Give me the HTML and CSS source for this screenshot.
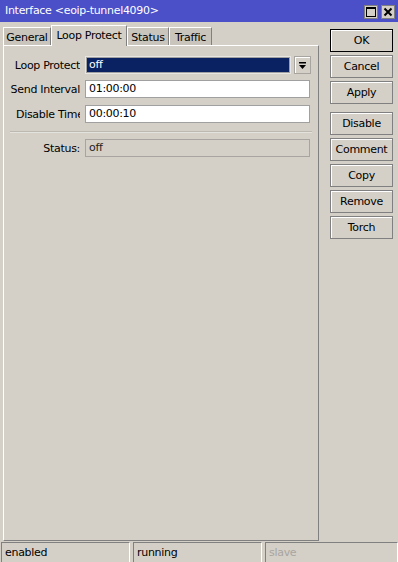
FILE: index.html
```html
<!DOCTYPE html>
<html>
<head>
<meta charset="utf-8">
<link rel="stylesheet" href="styles.css">
</head>
<body>
<div class="window">
  <div class="titlebar">
    <span class="title">Interface &lt;eoip-tunnel4090&gt;</span>
    <div class="tbtns">
      <span class="tbtn"><svg width="12" height="12" viewBox="0 0 12 12"><rect x="1.5" y="1.5" width="9" height="9" fill="none" stroke="#000" stroke-width="1"/><rect x="1" y="1" width="10" height="2" fill="#000"/></svg></span>
      <span class="tbtn"><svg width="12" height="12" viewBox="0 0 12 12"><path d="M2.5 2.5 L9.5 9.5 M9.5 2.5 L2.5 9.5" stroke="#000" stroke-width="2"/></svg></span>
    </div>
  </div>
  <div class="main">
    <div class="left">
      <div class="tabs">
        <div class="tab t-general">General</div>
        <div class="tab active t-loop">Loop Protect</div>
        <div class="tab t-status">Status</div>
        <div class="tab t-traffic">Traffic</div>
      </div>
      <div class="panel">
        <div class="row">
          <div class="label">Loop Protect</div>
          <div class="select">off</div>
          <div class="dd"><svg width="9" height="9" viewBox="0 0 9 9"><rect x="1" y="1" width="7" height="1.5" fill="#000"/><path d="M1 4 H8 L4.5 8 Z" fill="#000"/></svg></div>
        </div>
        <div class="row">
          <div class="label">Send Interval</div>
          <div class="input">01:00:00</div>
        </div>
        <div class="row r3">
          <div class="label l-dis">Disable Time</div>
          <div class="input">00:00:10</div>
        </div>
        <div class="sep"></div>
        <div class="row">
          <div class="label">Status:</div>
          <div class="input ro">off</div>
        </div>
      </div>
    </div>
    <div class="buttons">
      <div class="btn default">OK</div>
      <div class="btn">Cancel</div>
      <div class="btn">Apply</div>
      <div class="btn gapped">Disable</div>
      <div class="btn">Comment</div>
      <div class="btn">Copy</div>
      <div class="btn">Remove</div>
      <div class="btn">Torch</div>
    </div>
  </div>
  <div class="statusbar">
    <div class="cell c1">enabled</div>
    <div class="cell c2">running</div>
    <div class="cell c3 dim">slave</div>
  </div>
</div>
</body>
</html>
```
FILE: styles.css
```css
* { box-sizing: border-box; }
html, body { margin: 0; padding: 0; }
body {
  font-family: "DejaVu Sans", Verdana, sans-serif;
  font-size: 11px;
  letter-spacing: -0.3px;
  color: #000;
  background: #d4d0c8;
}
.window {
  width: 398px;
  height: 562px;
  display: flex;
  flex-direction: column;
  background: #d4d0c8;
  overflow: hidden;
}
.titlebar {
  height: 22px;
  background: #4b4fc8;
  color: #fff;
  display: flex;
  align-items: center;
  justify-content: space-between;
  padding: 0 3px 0 5px;
}
.title { line-height: 22px; }
.tbtns { display: flex; gap: 3px; padding-top: 1px; }
.tbtn {
  width: 14px;
  height: 14px;
  background: #d4d0c8;
  border: 1px solid #808080;
  display: flex;
  align-items: center;
  justify-content: center;
}
.tbtn svg { display: block; }
.main {
  flex: 1;
  display: flex;
}
.left {
  padding: 3px 0 0 3px;
  display: flex;
  flex-direction: column;
}
.tabs {
  height: 20px;
  display: flex;
  align-items: flex-end;
  position: relative;
  z-index: 1;
}
.tab {
  height: 18px;
  background: #c9c5bd;
  border-top: 1px solid #fff;
  border-left: 1px solid #fff;
  border-right: 1px solid #808080;
  display: flex;
  align-items: center;
  justify-content: center;
  padding-top: 1px;
}
.tab.active {
  height: 21px;
  margin-bottom: -1px;
  background: #d4d0c8;
  padding-bottom: 2px;
}
.t-general { width: 48px; }
.t-loop { width: 76px; }
.t-status { width: 42px; }
.t-traffic { width: 43px; }
.panel {
  width: 316px;
  height: 496px;
  border-top: 1px solid #fff;
  border-left: 1px solid #fff;
  border-right: 1px solid #808080;
  border-bottom: 1px solid #808080;
  padding: 10px 0 0 0;
  display: flex;
  flex-direction: column;
  gap: 6px;
}
.row {
  display: flex;
  align-items: center;
  height: 18px;
}
.row.r3 { margin-top: 1px; }
.label {
  width: 76px;
  margin-right: 5px;
  padding-left: 6px;
  padding-right: 0;
  text-align: right;
  white-space: nowrap;
  overflow: hidden;
  flex: none;
}
.label.l-dis { padding-left: 12px; }
.select {
  width: 206px;
  height: 18px;
  background: #0a2262;
  color: #fff;
  border: 1px solid #e8e6e2;
  outline: 1px solid #a0a0a0;
  outline-offset: -2px;
  padding: 1px 3px;
  line-height: 14px;
}
.dd {
  width: 17px;
  height: 18px;
  margin-left: 3px;
  border: 1px solid #a8a5a0;
  box-shadow: inset 1px 1px #fff;
  display: flex;
  align-items: center;
  justify-content: center;
}
.dd svg { display: block; }
.input {
  width: 225px;
  height: 18px;
  background: #fff;
  border: 1px solid #a0a0a0;
  padding: 1px 3px;
  line-height: 14px;
}
.input.ro {
  background: #d4d0c8;
  border-color: #a8a5a0;
  color: #222;
}
.sep {
  margin: 2px 6px 0 6px;
  height: 2px;
  border-top: 1px solid #bdb9b1;
  border-bottom: 1px solid #e4e2dc;
}
.buttons {
  margin-left: 11px;
  padding-top: 7px;
  display: flex;
  flex-direction: column;
  gap: 3px;
}
.btn {
  width: 63px;
  height: 23px;
  border: 1px solid #808080;
  box-shadow: inset 1px 1px #fff;
  display: flex;
  align-items: center;
  justify-content: center;
  padding-bottom: 1px;
}
.btn.default { border-color: #000; }
.btn.gapped { margin-top: 5px; }
.statusbar {
  height: 20px;
  display: flex;
  gap: 3px;
  padding-left: 1px;
}
.cell {
  height: 20px;
  border-top: 1px solid #808080;
  border-left: 1px solid #808080;
  border-right: 1px solid #fff;
  padding: 3px 0 0 3px;
  white-space: nowrap;
}
.c1 { width: 129px; }
.c2 { width: 129px; }
.c3 { width: 133px; }
.dim { color: #a8a5a0; }
```
